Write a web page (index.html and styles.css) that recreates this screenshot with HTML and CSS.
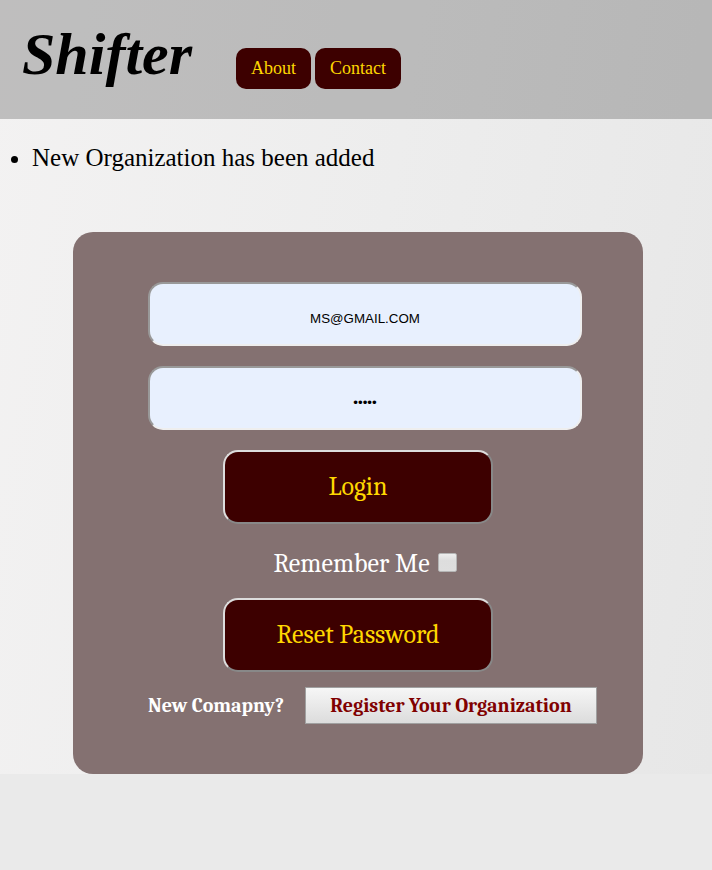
FILE: index.html
```html
<!DOCTYPE html>
<html lang="en">
<head>
<meta charset="utf-8">
<meta name="viewport" content="width=device-width, initial-scale=1">
<title>Shifter</title>
<link rel="stylesheet" href="styles.css">
</head>
<body>
<div class="page">
  <header class="header">
    <h1 class="brand">Shifter</h1>
    <nav class="nav">
      <a class="nav-link" href="#about">About</a>
      <a class="nav-link" href="#contact">Contact</a>
    </nav>
  </header>
  <ul class="messages">
    <li>New Organization has been added</li>
  </ul>
  <main class="card">
    <form class="form">
      <input class="field" type="text" aria-label="Email" value="MS@GMAIL.COM">
      <input class="field" type="password" aria-label="Password" value="12345">
      <button class="action" type="button">Login</button>
      <div class="remember">
        <label for="remember">Remember Me</label>
        <input class="checkbox" id="remember" type="checkbox">
      </div>
      <button class="action" type="button">Reset Password</button>
    </form>
    <div class="register">
      <span>New Comapny?</span>
      <button class="register-button" type="button">Register Your Organization</button>
    </div>
  </main>
</div>
</body>
</html>
```
FILE: styles.css
```css
* {
  box-sizing: border-box;
}

body {
  margin: 0;
  background: #eaeaea;
  font-family: "Liberation Serif", "Times New Roman", serif;
}

.page {
  background: linear-gradient(100deg, #f3f2f2, #ededed 50%, #e7e7e7);
}

.header {
  display: flex;
  align-items: flex-start;
  gap: 44px;
  padding: 20px 22px 30px;
  background: rgba(0, 0, 0, 0.21);
}

.brand {
  margin: 0;
  font-size: 60px;
  font-style: italic;
  line-height: 69px;
}

.nav {
  display: flex;
  gap: 4px;
  padding-top: 28px;
}

.nav-link {
  padding: 10px 15px;
  border-radius: 10px;
  background: #3d0000;
  color: #ffd700;
  font-size: 18px;
  line-height: 21px;
  text-decoration: none;
}

.messages {
  margin: 0;
  padding: 24px 0 60px 32px;
  font-size: 25px;
  line-height: 29px;
}

.card {
  margin: 0 69px 0 73px;
  padding: 50px 46px 50px 75px;
  border-radius: 20px;
  background: #847171;
  color: #fff;
  font-family: Cambria, "DejaVu Serif Condensed", "DejaVu Serif", serif;
  font-size: 26px;
}

.form {
  display: flex;
  flex-direction: column;
  align-items: center;
  margin-right: 15px;
}

.field {
  width: 100%;
  height: 64px;
  margin: 0 0 20px;
  padding: 8px 0 0;
  border: 2px solid;
  border-color: #999 #eee #eee #999;
  border-radius: 15px;
  background: #e8f0fe;
  color: #000;
  text-align: center;
}

.action {
  width: 270px;
  max-width: 100%;
  height: 74px;
  margin: 0 14px 0 0;
  border: 2px solid;
  border-color: #ddd #888 #888 #ddd;
  border-radius: 15px;
  background: #3d0000;
  color: #ffd700;
  font: inherit;
}

.remember {
  display: flex;
  align-items: center;
  gap: 8px;
  height: 74px;
  padding-top: 6px;
}

.checkbox {
  appearance: none;
  width: 19px;
  height: 19px;
  margin: 0 0 4px;
  border: 1px solid #b5b5b5;
  border-radius: 2px;
  background: linear-gradient(#eee, #ddd 40%, #dedede);
}

.register {
  display: flex;
  align-items: center;
  justify-content: space-between;
  margin-top: 15px;
  font-size: 20px;
  font-weight: bold;
}

.register-button {
  width: 292px;
  height: 37px;
  padding: 0;
  border: 1px solid #a0a0a0;
  background: linear-gradient(#f6f6f6, #dcdcdc);
  color: #800000;
  font: inherit;
}
```
